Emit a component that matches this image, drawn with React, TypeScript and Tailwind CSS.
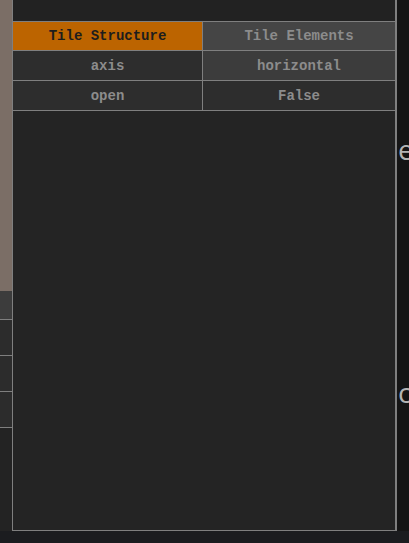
import React from "react";

const cellText = "flex items-center justify-center text-[14px] font-bold leading-none";

export default function App() {
  return (
    <div
      className="w-[409px] h-[543px] bg-[#1b1c1f] flex flex-col overflow-hidden"
      style={{ fontFamily: '"Liberation Mono", "DejaVu Sans Mono", monospace' }}
    >
      <div className="flex h-[531px]">
        {/* left strip */}
        <div className="w-[12px] flex flex-col bg-[#232323]">
          <div className="h-[291px] bg-[#7b6e66]" />
          <div className="h-[29px] bg-[#3c3c3c] border-b border-[#7f7f7f]" />
          <div className="h-[36px] bg-[#2c2c2c] border-b border-[#7f7f7f]" />
          <div className="h-[36px] bg-[#2c2c2c] border-b border-[#7f7f7f]" />
          <div className="h-[36px] bg-[#2c2c2c] border-b border-[#7f7f7f]" />
        </div>

        {/* main panel */}
        <div className="w-[385px] h-[531px] bg-[#242424] border-l border-r-2 border-b border-[#7f7f7f] flex flex-col">
          <div className="h-[21px] bg-[#222222]" />
          <div className="border-t border-[#7f7f7f]">
            <div className="flex h-[29px] border-b border-[#7f7f7f]">
              <div className={`${cellText} w-[190px] bg-[#bc6400] text-[#1d1d1d] border-r border-[#7f7f7f]`}>
                Tile Structure
              </div>
              <div className={`${cellText} flex-1 bg-[#454545] text-[#8c8c8c]`}>Tile Elements</div>
            </div>
            <div className="flex h-[30px] border-b border-[#7f7f7f]">
              <div className={`${cellText} w-[190px] bg-[#2d2d2d] text-[#8c8c8c] border-r border-[#7f7f7f]`}>
                axis
              </div>
              <div className={`${cellText} flex-1 bg-[#3c3c3c] text-[#8c8c8c]`}>horizontal</div>
            </div>
            <div className="flex h-[30px] border-b border-[#7f7f7f]">
              <div className={`${cellText} w-[190px] bg-[#2d2d2d] text-[#8c8c8c] border-r border-[#7f7f7f]`}>
                open
              </div>
              <div className={`${cellText} flex-1 bg-[#2d2d2d] text-[#8c8c8c]`}>False</div>
            </div>
          </div>
        </div>

        {/* right background */}
        <div className="flex-1 bg-[#151515] relative overflow-hidden">
          <div
            className="absolute left-[1px] top-[135px] text-[28px] leading-none text-[#b4b4b4]"
            style={{ fontFamily: '"Open Sans", "Noto Sans", sans-serif' }}
          >
            e
          </div>
          <div
            className="absolute left-[1px] top-[378px] text-[28px] leading-none text-[#b4b4b4]"
            style={{ fontFamily: '"Open Sans", "Noto Sans", sans-serif' }}
          >
            c
          </div>
        </div>
      </div>
      <div className="flex-1 bg-[#1b1c1f]" />
    </div>
  );
}
